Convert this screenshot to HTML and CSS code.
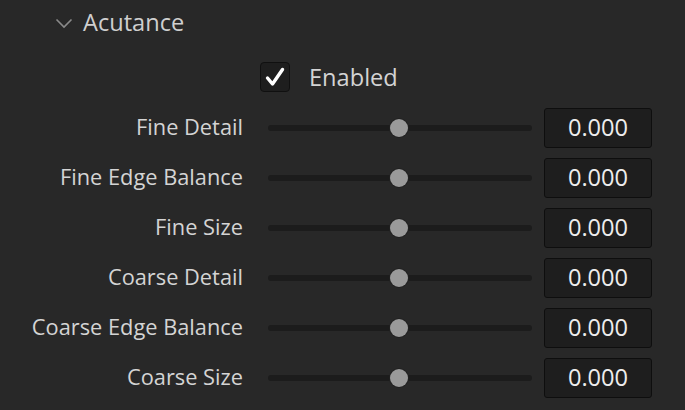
FILE: index.html
```html
<!DOCTYPE html>
<html>
<head>
<meta charset="utf-8">
<link rel="stylesheet" href="styles.css">
</head>
<body>
<div class="panel">
  <div class="header">
    <svg class="chev" width="18" height="12" viewBox="0 0 18 12"><path d="M1.5 2.5 L9 10 L16.5 2.5" fill="none" stroke="#8a8a8a" stroke-width="1.6"/></svg>
    <span class="title">Acutance</span>
  </div>
  <div class="enable-row">
    <span class="checkbox">
      <svg width="22" height="22" viewBox="0 0 22 22"><path d="M3.5 12 L8.5 18 L18.5 3.5" fill="none" stroke="#ffffff" stroke-width="3.4" stroke-linecap="round" stroke-linejoin="round"/></svg>
    </span>
    <span class="enable-label">Enabled</span>
  </div>
  <div class="rows">
    <div class="row"><span class="label">Fine Detail</span><div class="track"><span class="thumb"></span></div><span class="value">0.000</span></div>
    <div class="row"><span class="label">Fine Edge Balance</span><div class="track"><span class="thumb"></span></div><span class="value">0.000</span></div>
    <div class="row"><span class="label">Fine Size</span><div class="track"><span class="thumb"></span></div><span class="value">0.000</span></div>
    <div class="row"><span class="label">Coarse Detail</span><div class="track"><span class="thumb"></span></div><span class="value">0.000</span></div>
    <div class="row"><span class="label">Coarse Edge Balance</span><div class="track"><span class="thumb"></span></div><span class="value">0.000</span></div>
    <div class="row"><span class="label">Coarse Size</span><div class="track"><span class="thumb"></span></div><span class="value">0.000</span></div>
  </div>
</div>
</body>
</html>
```
FILE: styles.css
```css
html, body {
  margin: 0;
  padding: 0;
  background: #282828;
  width: 685px;
  height: 410px;
  overflow: hidden;
}
.panel {
  font-family: "Open Sans", "Noto Sans", sans-serif;
  color: #d4d4d4;
}
.header {
  display: flex;
  align-items: center;
  height: 44px;
  padding-left: 55px;
  gap: 10px;
}
.chev {
  display: block;
  margin-top: 1px;
}
.title {
  font-size: 23.6px;
  color: #cfcfcf;
}
.enable-row {
  display: flex;
  align-items: center;
  height: 30px;
  margin-top: 18px;
  padding-left: 260px;
  gap: 19px;
}
.checkbox {
  width: 28px;
  height: 28px;
  border: 1px solid #101010;
  border-radius: 4px;
  background: #1e1e1e;
  display: flex;
  align-items: center;
  justify-content: center;
}
.checkbox svg { display: block; }
.enable-label {
  font-size: 23.6px;
  color: #d4d4d4;
}
.rows {
  margin-top: 16px;
  display: flex;
  flex-direction: column;
  gap: 10px;
}
.row {
  display: grid;
  grid-template-columns: 243px 264px 108px;
  align-items: center;
  height: 40px;
}
.label {
  font-size: 21.8px;
  text-align: right;
  white-space: nowrap;
  color: #d4d4d4;
  padding-bottom: 3px;
}
.track {
  margin-left: 25px;
  width: 264px;
  height: 6px;
  border-radius: 3px;
  background: #1c1c1c;
  position: relative;
}
.thumb {
  position: absolute;
  left: 122px;
  top: -6px;
  width: 18px;
  height: 18px;
  border-radius: 50%;
  background: #9a9a9a;
  box-shadow: 0 0 0 1px #222;
}
.value {
  margin-left: 37px;
  width: 106px;
  height: 36px;
  padding-bottom: 2px;
  border: 1px solid #0e0e0e;
  border-radius: 3px;
  background: #1e1e1e;
  display: flex;
  align-items: center;
  justify-content: center;
  font-size: 23.6px;
  color: #ededed;
}
```
